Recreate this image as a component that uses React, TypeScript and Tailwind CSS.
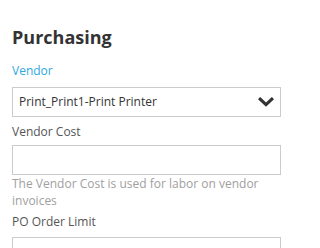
export default function App() {
  return (
    <div className="h-[248px] w-[300px] overflow-hidden bg-white pl-3 pr-[19px] font-['Open_Sans',sans-serif]">
      <h2 className="pt-[25px] text-[18px] font-bold leading-[24px] text-[#333]">Purchasing</h2>

      <label className="mt-[13px] block text-[12px] leading-[17px] text-[#2ea7e0]">Vendor</label>
      <div className="mt-[8px] flex h-[30px] items-center justify-between border border-[#ccc] pl-[6px] pr-[6px]">
        <span className="text-[12px] text-[#333]">Print_Print1-Print Printer</span>
        <svg width="16" height="10" viewBox="0 0 16 10" className="text-[#333]">
          <path d="M2.2 2.2 L8 7.6 L13.8 2.2" fill="none" stroke="currentColor" strokeWidth="3.2" strokeLinecap="square" />
        </svg>
      </div>

      <label className="mt-[6px] block text-[12px] leading-[17px] text-[#555]">Vendor Cost</label>
      <div className="mt-[5px] h-[30px] border border-[#ccc]" />
      <p className="mt-0 text-[12px] leading-[17px] text-[#a0a0a0]">
        The Vendor Cost is used for labor on vendor invoices
      </p>

      <label className="mt-[4px] block text-[12px] leading-[17px] text-[#555]">PO Order Limit</label>
      <div className="mt-[7px] h-[30px] border border-[#ccc]" />
    </div>
  );
}
